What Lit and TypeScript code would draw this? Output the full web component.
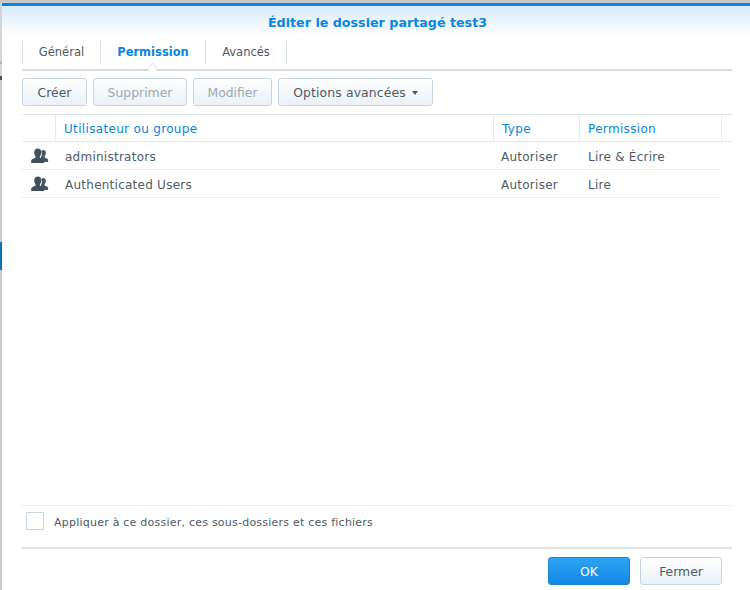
import { LitElement, html, css, svg } from "lit";
import { customElement } from "lit/decorators.js";

const userIcon = svg`<svg class="ico" width="18" height="16" viewBox="0 0 18 16"><path fill="#4a5866" d="M12.200 2c1.600 0 2.700 1.300 2.700 3.100 0 1.200-.5 2.300-1.200 3v1.400c1.300.5 3.400 1.100 3.400 2.500V14h-3.800c-.2-1.700-1.400-2.500-3-3.100l-.5-.2V9.200l.3-.4c.5-.7.800-1.700.8-2.700 0-1-.2-1.900-.7-2.600.5-.8 1.200-1.500 1.800-1.500z"/><path fill="#434f5c" d="M6.800 .5c2.100 0 3.500 1.700 3.500 3.900 0 1.500-.6 2.800-1.400 3.600v1.800c1.900.8 4.300 1.300 4.300 3.100v2.100H.2v-2.100c0-1.800 2.400-2.300 4.300-3.100V8c-.8-.8-1.300-2.100-1.300-3.600C3.200 2.200 4.700.5 6.800.5z"/></svg>`;

@customElement("app-root")
export class AppRoot extends LitElement {
  static styles = css`
    :host {
      display: block;
      width: 750px;
      height: 590px;
      overflow: hidden;
      background: #fff;
      font-family: "DejaVu Sans", Verdana, sans-serif;
      font-size: 12px;
      color: #505a64;
      position: relative;
    }
    * { box-sizing: border-box; }
    .top-strip { height: 3px; background: #c9c9c9; }
    .shell { display: flex; height: 587px; }
    .edge {
      width: 2px;
      flex: none;
      background: linear-gradient(
        #d4d4d4 0 59px,
        #b5b5b5 59px 61px,
        #d4d4d4 61px 73px,
        #4c5258 73px 77px,
        #c9c9c9 77px 239px,
        #0b6fb8 239px 267px,
        #c9c9c9 267px
      );
    }
    .dialog { flex: 1; display: flex; flex-direction: column; min-width: 0; }
    .head {
      height: 33px;
      border-top: 3px solid #0a86e0;
      background: linear-gradient(#d8ebfb, #ffffff);
      display: flex;
      align-items: center;
      justify-content: center;
      padding: 2px 0 0 3px;
      font-weight: bold;
      font-size: 12.700px;
      color: #0a86e0;
      flex: none;
    }
    .content { flex: 1; display: flex; flex-direction: column; padding: 4px 18px 5px 20px; }
    .tabs {
      display: flex;
      height: 31px;
      border-bottom: 2px solid #d9dcdf;
      position: relative;
      flex: none;
    }
    .tab {
      height: 24px;
      border-right: 1px solid #d5e0ea;
      display: flex;
      align-items: center;
      justify-content: center;
      font-size: 11.500px;
      color: #505a64;
    }
    .tab.first { border-left: 1px solid #d5e0ea; width: 79px; }
    .tab.active { width: 105px; color: #0a86e0; font-weight: bold; }
    .tab.last { width: 81px; }
    .notch {
      position: absolute;
      left: 125px;
      top: 23px;
      width: 11px;
      height: 11px;
      transform: rotate(45deg) scale(.7);
      background: #fff;
      border-top: 1px solid #d9dcdf;
      border-left: 1px solid #d9dcdf;
    }
    .toolbar { display: flex; gap: 6px; margin-top: 7px; flex: none; }
    .btn {
      height: 28px;
      border: 1px solid #c6d4e1;
      border-radius: 3px;
      background: linear-gradient(#ffffff, #eaf1f8);
      display: flex;
      align-items: center;
      justify-content: center;
      font-size: 12.400px;
      color: #505a64;
    }
    .btn.dis { color: #a0a8b0; }
    .btn.wide { letter-spacing: .12px; }
    .caret {
      width: 0; height: 0;
      margin-left: 6px;
      margin-top: 2px;
      border-left: 3.500px solid transparent;
      border-right: 3.500px solid transparent;
      border-top: 4px solid #505a64;
    }
    .table { margin-top: 8px; flex: 1; display: flex; flex-direction: column; }
    .hrow {
      display: grid;
      grid-template-columns: 34px 438px 86px 142px 10px;
      height: 28px;
      border-top: 1px solid #dfe7ee;
      border-bottom: 1px solid #e3eaf0;
      color: #0a86e0;
      flex: none;
      letter-spacing: .33px;
    }
    .hrow > div {
      border-right: 1px solid #e3eaf0;
      display: flex;
      align-items: center;
      padding: 2px 0 0 8px;
    }
    .hrow > div:last-child { border-right: 0; }
    .row {
      display: grid;
      grid-template-columns: 33px 438px 86px 141px;
      height: 28px;
      width: 698px;
      border-bottom: 1px solid #e7edf2;
      flex: none;
      align-items: center;
      letter-spacing: .25px;
    }
    .row > div { padding: 2px 0 0 8px; }
    .row > .icell { padding: 0 0 0 9px; display: flex; }
    .row > .name { padding-left: 10px; }
    .row > .perm { padding-left: 9px; }
    .ico { display: block; }
    .apply {
      height: 42px;
      border-top: 1px solid #ebeef1;
      display: flex;
      align-items: flex-start;
      gap: 10px;
      padding: 6px 0 0 4px;
      flex: none;
      font-size: 11px;
      letter-spacing: .23px;
    }
    .check {
      width: 18px; height: 18px;
      border: 1px solid #c6d4e1;
      border-radius: 1px;
      background: #fff;
      flex: none;
    }
    .apply span { line-height: 22px; }
    .foot {
      height: 38px;
      flex: none;
      border-top: 2px solid #dfe1e3;
      display: flex;
      justify-content: flex-end;
      gap: 10px;
      padding: 8px 10px 0 0;
    }
    .foot .btn { width: 82px; }
    .btn.primary {
      background: linear-gradient(#2ea4f5, #1388e4);
      border-color: #1a86d8;
      color: #fff;
    }
  `;

  render() {
    return html`
      <div class="top-strip"></div>
      <div class="shell">
        <div class="edge"></div>
        <div class="dialog">
          <div class="head">Éditer le dossier partagé test3</div>
          <div class="content">
            <div class="tabs">
              <div class="tab first">Général</div>
              <div class="tab active">Permission</div>
              <div class="tab last">Avancés</div>
              <div class="notch"></div>
            </div>
            <div class="toolbar">
              <div class="btn" style="width:65px">Créer</div>
              <div class="btn dis" style="width:94px">Supprimer</div>
              <div class="btn dis" style="width:79px">Modifier</div>
              <div class="btn wide" style="width:155px">Options avancées<span class="caret"></span></div>
            </div>
            <div class="table">
              <div class="hrow">
                <div></div>
                <div>Utilisateur ou groupe</div>
                <div>Type</div>
                <div>Permission</div>
                <div></div>
              </div>
              <div class="row">
                <div class="icell">${userIcon}</div>
                <div class="name">administrators</div>
                <div class="kind">Autoriser</div>
                <div class="perm">Lire &amp; Écrire</div>
              </div>
              <div class="row">
                <div class="icell">${userIcon}</div>
                <div class="name">Authenticated Users</div>
                <div class="kind">Autoriser</div>
                <div class="perm">Lire</div>
              </div>
            </div>
            <div class="apply">
              <div class="check"></div>
              <span>Appliquer à ce dossier, ces sous-dossiers et ces fichiers</span>
            </div>
            <div class="foot">
              <div class="btn primary">OK</div>
              <div class="btn">Fermer</div>
            </div>
          </div>
        </div>
      </div>
    `;
  }
}
